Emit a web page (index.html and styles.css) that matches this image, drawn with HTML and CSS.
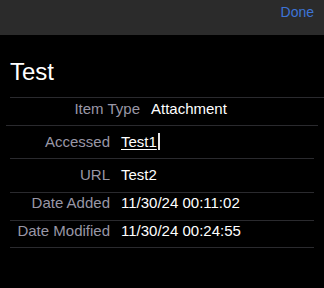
FILE: index.html
```html
<!DOCTYPE html>
<html lang="en">
<head>
  <meta charset="UTF-8" />
  <meta name="viewport" content="width=device-width, initial-scale=1" />
  <title>Item</title>
  <link rel="stylesheet" href="styles.css">
</head>
<body>

  <header class="nav-bar">
    <button class="done-btn">Done</button>
  </header>

  <h1 class="item-title">Test</h1>

  <div class="fields">
    <div class="field-row row-type">
      <span class="field-label">Item Type</span>
      <span class="field-value">Attachment</span>
    </div>
    <div class="field-row row-tall">
      <span class="field-label">Accessed</span>
      <span class="field-value editing"><u>Test1</u><span class="caret"></span></span>
    </div>
    <div class="field-row row-tall row-url">
      <span class="field-label">URL</span>
      <span class="field-value">Test2</span>
    </div>
    <div class="field-row row-short">
      <span class="field-label">Date Added</span>
      <span class="field-value">11/30/24 00:11:02</span>
    </div>
    <div class="field-row row-short">
      <span class="field-label">Date Modified</span>
      <span class="field-value">11/30/24 00:24:55</span>
    </div>
  </div>

</body>
</html>
```

FILE: styles.css
```css
/* Reset */
* {
  margin: 0;
  padding: 0;
  box-sizing: border-box;
}

body {
  background: #000;
  color: #fff;
  font-family: "Liberation Sans", Arial, sans-serif;
  width: 324px;
  min-height: 288px;
}

/* Barra superior */
.nav-bar {
  height: 35px;
  background: #2b2b2b;
  display: flex;
  justify-content: flex-end;
  align-items: flex-start;
  padding: 3px 10px 0 0;
}

.done-btn {
  background: none;
  border: none;
  color: #3d74d6;
  font-family: inherit;
  font-size: 14px;
  line-height: 18px;
}

/* Titulo */
.item-title {
  font-size: 24px;
  font-weight: 400;
  line-height: 28px;
  padding: 23px 0 11px;
  margin-left: 10px;
  border-bottom: 1px solid #2a2a2e;
}

/* Linhas de campos */
.field-row {
  display: flex;
  gap: 11px;
  font-size: 15px;
  line-height: 18px;
  padding: 1px 0 7px;
  margin: 0 10px;
  border-bottom: 1px solid #2a2a2e;
}

.field-label {
  width: 100px;
  text-align: right;
  color: #9997a6;
  white-space: nowrap;
}

.field-value {
  color: #fff;
  white-space: nowrap;
}

.row-type {
  padding: 2px 0 7px;
  margin: 0 6px;
}

.row-type .field-label {
  width: 134px;
}

.row-tall {
  padding: 7px 0 7px;
}

.row-url {
  padding-bottom: 8px;
}

.row-short {
  padding: 1px 0 8px;
}

.row-short:last-child {
  padding-bottom: 7px;
}

.field-value u {
  text-underline-offset: 2px;
}

.caret {
  display: inline-block;
  width: 2px;
  height: 17px;
  margin-left: 1px;
  vertical-align: -3px;
  background: #e6e6e6;
}
```
